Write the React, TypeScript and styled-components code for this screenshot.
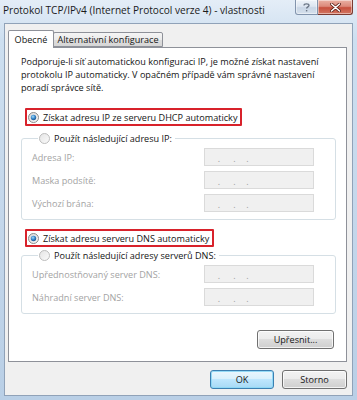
import React from 'react';
import styled, { createGlobalStyle } from 'styled-components';

const GlobalStyle = createGlobalStyle`
  html, body {
    margin: 0;
    padding: 0;
    background: #ffffff;
  }
  body {
    font-family: "Open Sans", "Noto Sans", sans-serif;
    font-size: 9.1px;
    color: #141414;
  }
`;

/* okno s aero rámečkem */
const Window = styled.div`
  width: 357px;
  height: 400px;
  box-sizing: border-box;
  display: flex;
  flex-direction: column;
  background: linear-gradient(180deg, #e4edf7 0%, #cddff0 10%, #c4d7eb 55%, #b9cfe6 100%);
`;

const TitleBar = styled.div`
  height: 23px;
  flex: 0 0 auto;
  display: flex;
  align-items: flex-start;
  padding-left: 3px;
`;

const Title = styled.span`
  margin-top: 3px;
  font-size: 10.1px;
  line-height: 15px;
  color: #1b1b1b;
  white-space: nowrap;
`;

const CaptionButtons = styled.div`
  margin-left: auto;
  margin-right: 4px;
  display: flex;
`;

const CaptionButton = styled.div<{ $close?: boolean }>`
  height: 15px;
  width: ${(p) => (p.$close ? 35 : 23)}px;
  flex: 0 0 auto;
  box-sizing: border-box;
  display: flex;
  align-items: center;
  justify-content: center;
  border: 1px solid ${(p) => (p.$close ? '#7b3a31' : '#8294ad')};
  border-top: 0;
  border-left-width: ${(p) => (p.$close ? 0 : 1)}px;
  border-radius: ${(p) => (p.$close ? '0 0 3px 0' : '0 0 0 3px')};
  background: ${(p) =>
    p.$close
      ? 'linear-gradient(180deg, #eab1a4 0%, #dc8a7b 45%, #c7503d 55%, #d27763 100%)'
      : 'linear-gradient(180deg, #eef3f9 0%, #dde6f1 45%, #c9d6e6 55%, #d5e0ec 100%)'};
  box-shadow: inset 0 0 0 1px rgba(255, 255, 255, 0.45);
`;

/* klientská oblast */
const Client = styled.div`
  flex: 1 1 auto;
  margin: 0 4px 4px 4px;
  border: 1px solid #90a2b8;
  background: #f0f0f0;
  display: flex;
  flex-direction: column;
  padding: 6px 5px 6px 3px;
`;

const Tabs = styled.div`
  display: flex;
  align-items: flex-end;
  height: 17px;
  position: relative;
  z-index: 1;
`;

const Tab = styled.div<{ $active?: boolean; $width: number }>`
  box-sizing: border-box;
  width: ${(p) => p.$width}px;
  height: ${(p) => (p.$active ? 18 : 15)}px;
  margin-bottom: ${(p) => (p.$active ? -1 : 0)}px;
  margin-left: ${(p) => (p.$active ? 0 : -1)}px;
  display: flex;
  align-items: center;
  justify-content: center;
  border: 1px solid #8e9199;
  border-bottom: ${(p) => (p.$active ? '0' : '1px solid #8e9199')};
  border-radius: 2px 2px 0 0;
  background: ${(p) =>
    p.$active ? '#ffffff' : 'linear-gradient(180deg, #f5f5f5 0%, #ebebeb 50%, #dedede 51%, #d6d6d6 100%)'};
  white-space: nowrap;
  color: #151515;
`;

const Panel = styled.div`
  flex: 1 1 auto;
  border: 1px solid #8e9199;
  background: #ffffff;
  display: flex;
  flex-direction: column;
  padding: 7px 10px 10px 12px;
`;

const Intro = styled.p`
  margin: 0;
  line-height: 13px;
  white-space: nowrap;
`;

const OptionRow = styled.div<{ $highlight?: boolean }>`
  display: inline-flex;
  align-self: flex-start;
  align-items: center;
  column-gap: 4px;
  height: 18px;
  box-sizing: border-box;
  margin-left: 4px;
  padding: 0 3px 0 1px;
  border: 2px solid ${(p) => (p.$highlight ? '#d8222b' : 'transparent')};
  border-radius: 1px;
  white-space: nowrap;
`;

const Group = styled.fieldset`
  margin: 0;
  min-width: 0;
  border: 1px solid #d5dfe5;
  border-radius: 3px;
  padding: 3px 21px 7px 10px;
  display: grid;
  grid-template-columns: 1fr 110px;
  row-gap: 5px;
  align-items: center;
`;

const GroupLegend = styled.legend`
  margin-left: 6px;
  padding: 0 3px 0 1px;
  display: flex;
  align-items: center;
  column-gap: 4px;
  line-height: 13px;
  white-space: nowrap;
`;

const FieldLabel = styled.span`
  color: #a3a3a3;
  white-space: nowrap;
`;

const IpBox = styled.div`
  height: 18px;
  box-sizing: border-box;
  border: 1px solid #dadada;
  background: #f0f0f0;
  display: grid;
  grid-template-columns: 28px 3px 23px 3px 23px 3px 1fr;
  align-items: center;
`;

const IpDot = styled.span`
  grid-row: 1;
  color: #9c9c9c;
  font-size: 9px;
  line-height: 9px;
  text-align: center;
  padding-top: 2px;
`;

const ButtonRow = styled.div<{ $top: number }>`
  display: flex;
  justify-content: flex-end;
  column-gap: 8px;
  margin-top: ${(p) => p.$top}px;
`;

const Button = styled.button<{ $width: number; $default?: boolean }>`
  width: ${(p) => p.$width}px;
  height: 19px;
  box-sizing: border-box;
  padding: 0;
  font: inherit;
  font-size: 9.1px;
  color: #161616;
  border: 1px solid ${(p) => (p.$default ? '#3c7fb1' : '#707070')};
  border-radius: 3px;
  background: ${(p) =>
    p.$default
      ? 'linear-gradient(180deg, #eaf6fd 0%, #d9f0fc 49%, #bee6fd 50%, #a7d9f5 100%)'
      : 'linear-gradient(180deg, #f2f2f2 0%, #ebebeb 49%, #dddddd 50%, #cfcfcf 100%)'};
  box-shadow: inset 0 0 0 1px ${(p) => (p.$default ? 'rgba(140, 215, 245, 0.9)' : 'rgba(255, 255, 255, 0.75)')};
`;

function Radio({ checked, disabled }: { checked?: boolean; disabled?: boolean }) {
  const id = React.useId().replace(/:/g, '');
  return (
    <svg width="11" height="11" viewBox="0 0 11 11" style={{ flex: '0 0 auto' }}>
      <defs>
        <linearGradient id={`bg${id}`} x1="0" y1="0" x2="1" y2="1">
          <stop offset="0" stopColor={disabled ? '#e4e4e4' : '#d6d6d6'} />
          <stop offset="1" stopColor="#fbfbfb" />
        </linearGradient>
        <radialGradient id={`dot${id}`} cx="0.4" cy="0.35" r="0.7">
          <stop offset="0" stopColor="#a9dcf6" />
          <stop offset="0.5" stopColor="#3c8ccf" />
          <stop offset="1" stopColor="#1a4f86" />
        </radialGradient>
      </defs>
      <circle cx="5.5" cy="5.5" r="5" fill={`url(#bg${id})`} stroke={disabled ? '#bcbcbc' : '#8a8a8a'} />
      {checked && <circle cx="5.5" cy="5.5" r="2.7" fill={`url(#dot${id})`} />}
    </svg>
  );
}

function IpField() {
  return (
    <IpBox>
      <span />
      <IpDot>.</IpDot>
      <span />
      <IpDot>.</IpDot>
      <span />
      <IpDot>.</IpDot>
      <span />
    </IpBox>
  );
}

export default function App() {
  return (
    <>
      <GlobalStyle />
      <Window>
        <TitleBar>
          <Title>Protokol TCP/IPv4 (Internet Protocol verze 4) - vlastnosti</Title>
          <CaptionButtons>
            <CaptionButton>
              <svg width="7" height="9" viewBox="0 0 7 9">
                <path d="M1 2.4C1 1.2 2 0.8 3.5 0.8S6 1.4 6 2.5C6 3.8 3.6 4 3.6 5.6" fill="none" stroke="#6b7686" strokeWidth="1.3" />
                <rect x="2.9" y="7" width="1.4" height="1.4" fill="#6b7686" />
              </svg>
            </CaptionButton>
            <CaptionButton $close>
              <svg width="11" height="9" viewBox="0 0 11 9">
                <path d="M1.5 1L9.5 8M9.5 1L1.5 8" stroke="#5a1d15" strokeWidth="3" strokeLinecap="round" />
                <path d="M1.5 1L9.5 8M9.5 1L1.5 8" stroke="#ffffff" strokeWidth="1.6" strokeLinecap="round" />
              </svg>
            </CaptionButton>
          </CaptionButtons>
        </TitleBar>

        <Client>
          <Tabs>
            <Tab $active $width={46}>
              Obecné
            </Tab>
            <Tab $width={110}>Alternativní konfigurace</Tab>
          </Tabs>
          <Panel>
            <Intro>
              Podporuje-li síť automatickou konfiguraci IP, je možné získat nastavení
              <br />
              protokolu IP automaticky. V opačném případě vám správné nastavení
              <br />
              poradí správce sítě.
            </Intro>

            <OptionRow $highlight style={{ marginTop: 14 }}>
              <Radio checked />
              Získat adresu IP ze serveru DHCP automaticky
            </OptionRow>

            <Group style={{ marginTop: 6 }}>
              <GroupLegend>
                <Radio disabled />
                Použít následující adresu IP:
              </GroupLegend>
              <FieldLabel>Adresa IP:</FieldLabel>
              <IpField />
              <FieldLabel>Maska podsítě:</FieldLabel>
              <IpField />
              <FieldLabel>Výchozí brána:</FieldLabel>
              <IpField />
            </Group>

            <OptionRow $highlight style={{ marginTop: 9 }}>
              <Radio checked />
              Získat adresu serveru DNS automaticky
            </OptionRow>

            <Group style={{ marginTop: 2 }}>
              <GroupLegend>
                <Radio disabled />
                Použít následující adresy serverů DNS:
              </GroupLegend>
              <FieldLabel>Upřednostňovaný server DNS:</FieldLabel>
              <IpField />
              <FieldLabel>Náhradní server DNS:</FieldLabel>
              <IpField />
            </Group>

            <ButtonRow $top={16} style={{ marginRight: 2 }}>
              <Button $width={77}>Upřesnit...</Button>
            </ButtonRow>
          </Panel>

          <ButtonRow $top={8}>
            <Button $width={64} $default>
              OK
            </Button>
            <Button $width={65}>Storno</Button>
          </ButtonRow>
        </Client>
      </Window>
    </>
  );
}
